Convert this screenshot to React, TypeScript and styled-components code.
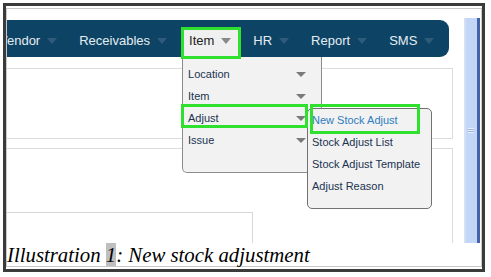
import * as React from 'react';
import styled, { createGlobalStyle } from 'styled-components';

const GlobalStyle = createGlobalStyle`
  body {
    margin: 0;
    background: #ffffff;
    font-family: "Liberation Sans", Arial, sans-serif;
  }
`;

const Frame = styled.div`
  margin: 3px;
  width: 476px;
  border: 3px solid #3b3b3b;
  padding: 2px 0;
`;

const Inner = styled.div`
  border: 1px solid #c9c9c9;
`;

const Shot = styled.div`
  display: flex;
  height: 234px;
  overflow: hidden;
`;

const PageClip = styled.div`
  flex: 1;
  overflow: hidden;
`;

const Page = styled.div`
  margin-left: -16px;
  padding-top: 11px;
  height: 100%;
  box-sizing: border-box;
`;

const NavBar = styled.nav`
  display: flex;
  gap: 6px;
  height: 37px;
  margin-right: 15px;
  background: #0d4466;
  border-radius: 9px;
`;

const NavItem = styled.div<{ $active?: boolean }>`
  position: relative;
  display: flex;
  align-items: center;
  gap: 7px;
  height: 29px;
  margin-top: 8px;
  padding: 0 8px 4px;
  box-sizing: border-box;
  font-size: 13px;
  color: ${(p) => (p.$active ? '#222222' : '#e6edf2')};
  background: ${(p) => (p.$active ? '#f0f0f0' : 'transparent')};
  white-space: nowrap;
`;

const Caret = styled.span<{ $color: string; $w?: number; $h?: number }>`
  width: 0;
  height: 0;
  border-left: ${(p) => (p.$w ?? 10) / 2}px solid transparent;
  border-right: ${(p) => (p.$w ?? 10) / 2}px solid transparent;
  border-top: ${(p) => p.$h ?? 6}px solid ${(p) => p.$color};
`;

const Dropdown = styled.div`
  position: absolute;
  top: 100%;
  left: 1px;
  z-index: 2;
  width: 140px;
  padding: 6px 0 21px;
  box-sizing: border-box;
  background: #f2f2f2;
  border: 1px solid #8c8c8c;
  border-top: none;
  border-radius: 0 0 5px 5px;
`;

const MenuRow = styled.div`
  position: relative;
  display: flex;
  align-items: center;
  justify-content: space-between;
  height: 22px;
  padding: 0 15px 0 5px;
  font-size: 11px;
  color: #1b3350;
`;

const SubMenu = styled.div`
  position: absolute;
  top: 1px;
  left: 124px;
  z-index: 3;
  width: 125px;
  padding-bottom: 11px;
  box-sizing: border-box;
  background: #f2f2f2;
  border: 1px solid #717171;
  border-radius: 5px;
`;

const SubRow = styled.div<{ $hover?: boolean }>`
  position: relative;
  display: flex;
  align-items: center;
  height: 22px;
  padding-left: 4px;
  font-size: 11px;
  white-space: nowrap;
  color: ${(p) => (p.$hover ? '#2e7cc0' : '#1b3350')};
`;

const Mark = styled.span<{ $inset: string }>`
  position: absolute;
  inset: ${(p) => p.$inset};
  z-index: 4;
  border: 3px solid #2fe02f;
  pointer-events: none;
`;

const Panel = styled.div<{ $top: number; $height?: number }>`
  margin: ${(p) => p.$top}px 11px 0 0;
  height: ${(p) => (p.$height ? `${p.$height}px` : '200px')};
  box-sizing: border-box;
  border: 1px solid #dcdcdc;
`;

const SubPanel = styled.div`
  width: 260px;
  height: 100px;
  margin-top: 63px;
  border-top: 1px solid #d6d6d6;
  border-right: 1px solid #d6d6d6;
`;

const Scrollbar = styled.div`
  display: flex;
  align-items: center;
  justify-content: center;
  width: 16px;
  margin: 9px 1px 0 0;
  padding-right: 3px;
  box-sizing: border-box;
  background: linear-gradient(to right, #d3e0f8 0 2px, #c3d6f5 2px 13px, #4562ad 13px 16px);
`;

const Grip = styled.div`
  width: 6px;
  height: 5px;
  background: repeating-linear-gradient(to bottom, #e8effc 0 1px, #9fb5de 1px 2px);
`;

const Caption = styled.div`
  height: 23px;
  font-family: "Liberation Serif", "Times New Roman", serif;
  font-style: italic;
  font-size: 20.8px;
  line-height: 23px;
  color: #000000;
  white-space: nowrap;
`;

const Field = styled.span`
  background: #bfbfbf;
`;

const navItems = ['Vendor', 'Receivables', 'Item', 'HR', 'Report', 'SMS'];
const itemMenu = ['Location', 'Item', 'Adjust', 'Issue'];
const adjustMenu = ['New Stock Adjust', 'Stock Adjust List', 'Stock Adjust Template', 'Adjust Reason'];

const App = () => (
  <>
    <GlobalStyle />
    <Frame>
      <Inner>
        <Shot>
          <PageClip>
            <Page>
              <NavBar>
                {navItems.map((label) =>
                  label === 'Item' ? (
                    <NavItem key={label} $active>
                      {label}
                      <Caret $color="#888888" />
                      <Mark $inset="-1px -2px -2px 0" />
                      <Dropdown>
                        {itemMenu.map((entry) => (
                          <MenuRow key={entry}>
                            {entry}
                            <Caret $color="#7a7a7a" $h={5} />
                            {entry === 'Adjust' && (
                              <>
                                <Mark $inset="-3px 13px 1px -2px" />
                                <SubMenu>
                                  {adjustMenu.map((sub, i) => (
                                    <SubRow key={sub} $hover={i === 0}>
                                      {sub}
                                      {i === 0 && <Mark $inset="-5px 11px -3px 2px" />}
                                    </SubRow>
                                  ))}
                                </SubMenu>
                              </>
                            )}
                          </MenuRow>
                        ))}
                      </Dropdown>
                    </NavItem>
                  ) : (
                    <NavItem key={label}>
                      {label}
                      <Caret $color="#2f5a7a" />
                    </NavItem>
                  )
                )}
              </NavBar>
              <Panel $top={11} $height={71} />
              <Panel $top={9}>
                <SubPanel />
              </Panel>
            </Page>
          </PageClip>
          <Scrollbar>
            <Grip />
          </Scrollbar>
        </Shot>
        <Caption>
          Illustration <Field>1</Field>: New stock adjustment
        </Caption>
      </Inner>
    </Frame>
  </>
);

export default App;
